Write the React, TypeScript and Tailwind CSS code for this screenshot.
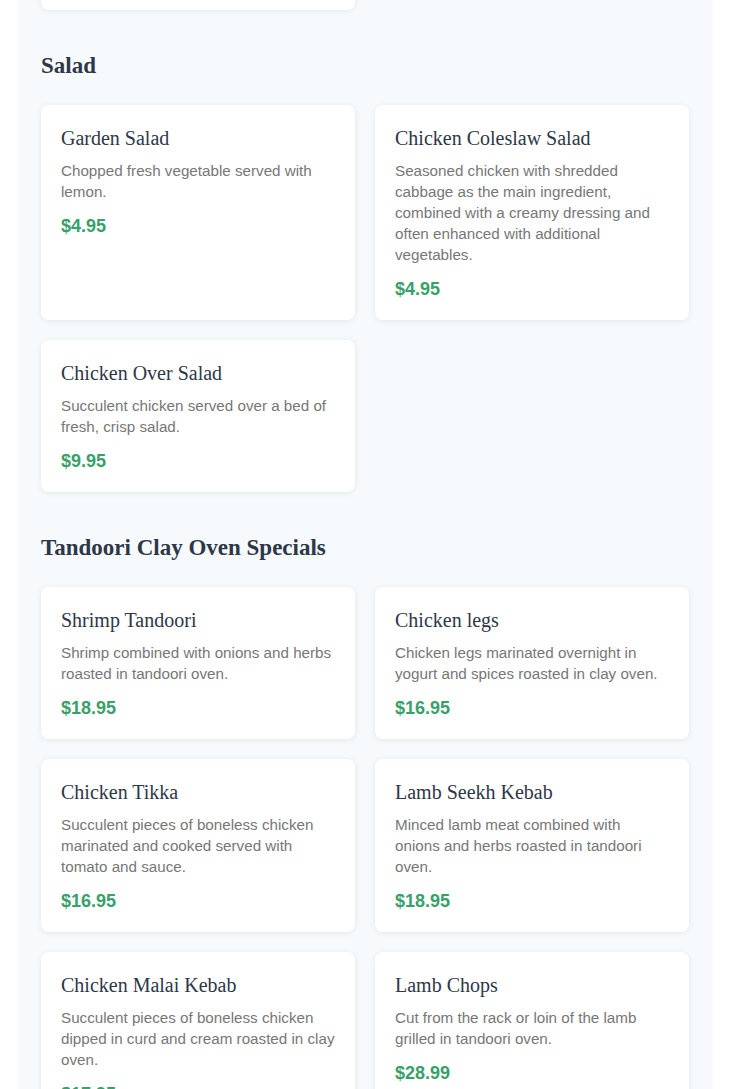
import React from 'react';

interface MenuItem {
  name: string;
  description: string;
  price: string;
}

interface Section {
  title: string;
  items: MenuItem[];
}

const sections: Section[] = [
  {
    title: 'Salad',
    items: [
      { name: 'Garden Salad', description: 'Chopped fresh vegetable served with lemon.', price: '$4.95' },
      {
        name: 'Chicken Coleslaw Salad',
        description:
          'Seasoned chicken with shredded cabbage as the main ingredient, combined with a creamy dressing and often enhanced with additional vegetables.',
        price: '$4.95',
      },
      { name: 'Chicken Over Salad', description: 'Succulent chicken served over a bed of fresh, crisp salad.', price: '$9.95' },
    ],
  },
  {
    title: 'Tandoori Clay Oven Specials',
    items: [
      { name: 'Shrimp Tandoori', description: 'Shrimp combined with onions and herbs roasted in tandoori oven.', price: '$18.95' },
      { name: 'Chicken legs', description: 'Chicken legs marinated overnight in yogurt and spices roasted in clay oven.', price: '$16.95' },
      {
        name: 'Chicken Tikka',
        description: 'Succulent pieces of boneless chicken marinated and cooked served with tomato and sauce.',
        price: '$16.95',
      },
      { name: 'Lamb Seekh Kebab', description: 'Minced lamb meat combined with onions and herbs roasted in tandoori oven.', price: '$18.95' },
      {
        name: 'Chicken Malai Kebab',
        description: 'Succulent pieces of boneless chicken dipped in curd and cream roasted in clay oven.',
        price: '$17.95',
      },
      { name: 'Lamb Chops', description: 'Cut from the rack or loin of the lamb grilled in tandoori oven.', price: '$28.99' },
    ],
  },
];

const serif = "font-['Liberation_Serif',serif]";

const MenuCard: React.FC<{ item: MenuItem }> = ({ item }) => (
  <div className="bg-white rounded-lg shadow-[0_1px_6px_rgba(0,0,0,0.08)] px-5 pt-5 pb-[19px]">
    <h3 className={`${serif} text-[20px] leading-[26px] text-[#2d3748] mb-[9px]`}>{item.name}</h3>
    <p className="text-[15.2px] leading-[21px] text-[#777777]">{item.description}</p>
    <p className="mt-3 text-[18px] leading-[24px] font-bold text-[#38a169]">{item.price}</p>
  </div>
);

const App: React.FC = () => {
  return (
    <div className="min-h-screen bg-white font-['Liberation_Sans',Arial,sans-serif] overflow-hidden">
      <div className="mx-5 bg-[#f7fafc] shadow-[0_0_6px_rgba(0,0,0,0.06)] px-[21px] pb-10 -mt-[90px]">
        {/* tail of the previous section, scrolled out of view */}
        <div className="grid grid-cols-2 gap-5">
          <div className="h-[100px] bg-white rounded-lg shadow-[0_1px_6px_rgba(0,0,0,0.08)]" />
        </div>

        {sections.map((section) => (
          <section key={section.title} className="mt-10">
            <h2 className={`${serif} font-bold text-[23px] leading-8 text-[#2d3748] mb-[23px]`}>{section.title}</h2>
            <div className="grid grid-cols-2 gap-5">
              {section.items.map((item) => (
                <MenuCard key={item.name} item={item} />
              ))}
            </div>
          </section>
        ))}
      </div>
    </div>
  );
};

export default App;
